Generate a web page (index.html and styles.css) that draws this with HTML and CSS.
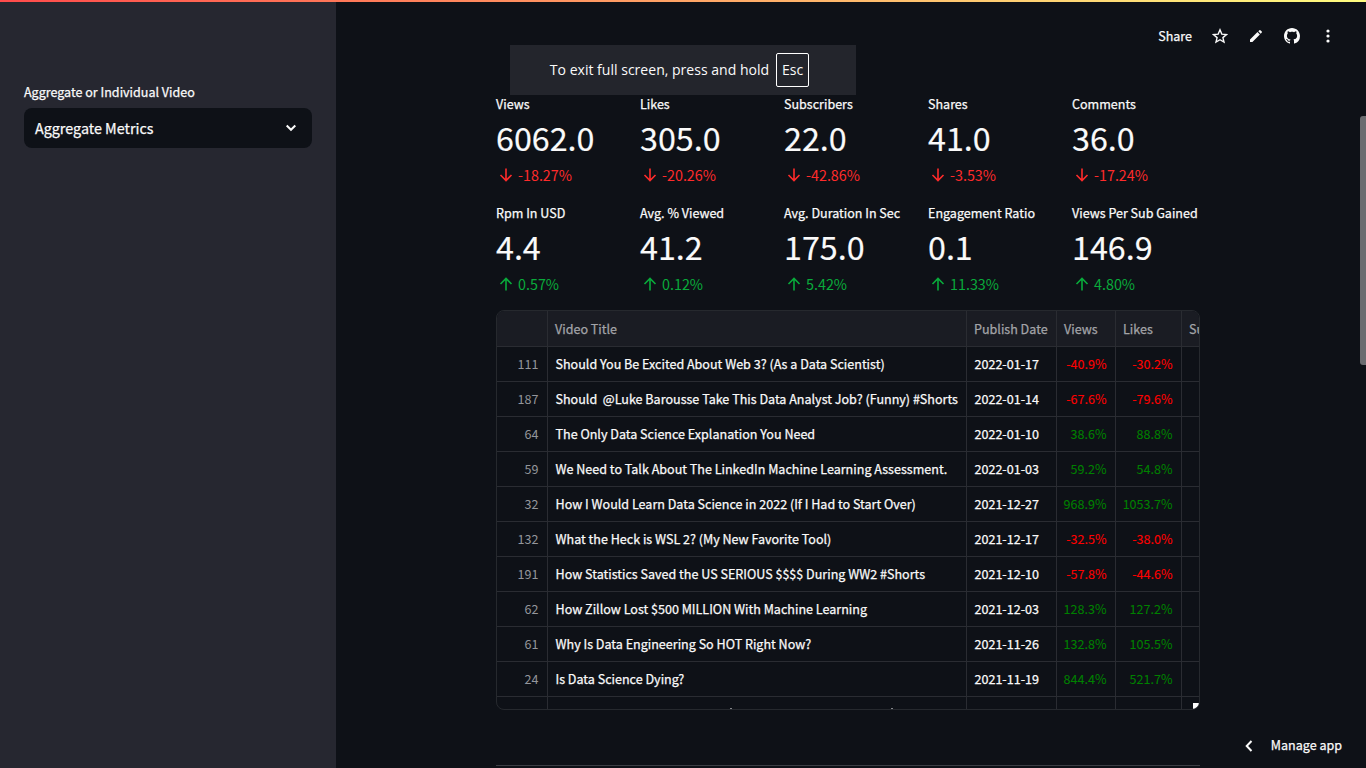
FILE: index.html
```html
<!DOCTYPE html>
<html lang="en">
<head>
<meta charset="utf-8">
<title>Video analytics</title>
<link rel="stylesheet" href="styles.css">
</head>
<body>
<div class="decoration"></div>
<div class="app">
  <aside class="sidebar">
    <div class="field-label">Aggregate or Individual Video</div>
    <div class="select"><span>Aggregate Metrics</span>
      <svg width="12" height="8" viewBox="0 0 12 8"><path d="M1.7 1.5 6 5.8l4.3-4.3" fill="none" stroke="#fafafa" stroke-width="2"/></svg>
    </div>
  </aside>
  <main class="main">
    <header class="toolbar">
      <span class="share">Share</span>
      <svg width="16" height="16" viewBox="0 0 16 16"><path d="m8 1.8 1.8 4.3 4.7.4-3.6 3.1 1.1 4.5-4-2.4-4 2.4 1.100-4.500L1.500 6.500l4.700-.4z" fill="none" stroke="#fafafa" stroke-width="1.4"/></svg>
      <svg width="16" height="16" viewBox="0 0 16 16"><path d="M2 11.600 9.500 4.100l2.400 2.400L4.400 14H2zM10.300 3.300l1.100-1.100q.5-.4 1 0l1.400 1.400q.4.500 0 1l-1.100 1.100z" fill="#fafafa"/></svg>
      <svg width="16" height="16" viewBox="0 0 16 16"><path fill="#fafafa" d="M8 0C3.58 0 0 3.58 0 8c0 3.54 2.29 6.53 5.47 7.59.4.07.55-.17.55-.38 0-.19-.01-.82-.01-1.49-2.01.37-2.53-.49-2.69-.94-.09-.23-.48-.94-.82-1.13-.28-.15-.68-.52-.01-.53.63-.01 1.08.58 1.23.82.72 1.21 1.87.87 2.33.66.07-.52.28-.87.51-1.07-1.78-.2-3.64-.89-3.64-3.95 0-.87.31-1.59.82-2.15-.08-.2-.36-1.02.08-2.12 0 0 .67-.21 2.2.82.64-.18 1.32-.27 2-.27s1.36.09 2 .27c1.53-1.04 2.2-.82 2.2-.82.44 1.1.16 1.92.08 2.12.51.56.82 1.27.82 2.15 0 3.07-1.87 3.75-3.65 3.95.29.25.54.73.54 1.48 0 1.07-.01 1.93-.01 2.2 0 .21.15.46.55.38A8.01 8.01 0 0 0 16 8c0-4.42-3.58-8-8-8"/></svg>
      <svg width="16" height="16" viewBox="0 0 16 16" fill="#fafafa"><circle cx="8" cy="3" r="1.6"/><circle cx="8" cy="8" r="1.6"/><circle cx="8" cy="13" r="1.6"/></svg>
    </header>
    <div class="content">
      <section class="metrics" id="metrics"></section>
      <div class="table" id="table">
        <div class="row head"><span></span><span>Video Title</span><span>Publish Date</span><span>Views</span><span>Likes</span><span>Su</span></div>
      </div>
      <div class="divider"></div>
    </div>
    <div class="manage"><svg width="8" height="12" viewBox="0 0 8 12"><path d="M6.5 1 1.7 6l4.8 5" fill="none" stroke="#fafafa" stroke-width="2"/></svg><span>Manage app</span></div>
    <div class="scroll-thumb"></div>
  </main>
</div>
<div class="fullscreen-tip"><span>To exit full screen, press and hold</span><kbd>Esc</kbd></div>
<script src="app.js"></script>
</body>
</html>
```
FILE: styles.css
```css
* { box-sizing: border-box; }
body {
  margin: 0;
  height: 768px;
  overflow: hidden;
  background: #0e1117;
  color: #fafafa;
  font-family: "Noto Sans CJK SC", "Noto Sans", sans-serif;
  font-size: 12.54px;
  -webkit-text-stroke: 0.25px currentColor;
}
svg { display: block; flex: none; }
.decoration {
  position: absolute;
  inset: 0 0 auto 0;
  height: 2px;
  z-index: 3;
  background: linear-gradient(90deg, #ff4b4b, #fffd80);
}
.app { display: flex; height: 768px; }
.sidebar { width: 336px; flex: none; background: #262730; padding: 82px 24px 0; }
.field-label { height: 20px; line-height: 20px; margin-bottom: 6px; }
.select {
  height: 40px;
  border-radius: 8px;
  background: #0e1117;
  padding: 0 15px 0 11px;
  display: flex;
  align-items: center;
  justify-content: space-between;
  font-size: 14.33px;
  line-height: 24px;
}
.main { position: relative; flex: 1; }
.toolbar {
  display: flex;
  align-items: center;
  justify-content: flex-end;
  gap: 20px;
  height: 72px;
  padding-right: 30px;
}
.share { line-height: 20px; }
.content { width: 704px; margin-left: 160px; padding-top: 22px; }
.metrics { display: grid; grid-template-columns: repeat(5, 128px); column-gap: 16px; row-gap: 16px; }
.metric { height: 93px; white-space: nowrap; }
.metric-label { height: 20px; line-height: 20px; }
.metric-value { height: 49px; line-height: 46px; font-size: 32.25px; -webkit-text-stroke-width: 0.15px; }
.metric-delta { display: flex; align-items: center; height: 24px; line-height: 24px; font-size: 14.33px; gap: 2px; -webkit-text-stroke-width: 0; }
.metric-delta.down { color: #ff2b2b; }
.metric-delta.up { color: #09ab3b; }
.table {
  position: relative;
  margin-top: 14px;
  height: 400px;
  border: 1px solid #26292e;
  border-radius: 8px;
  overflow: hidden;
}
.row { display: grid; grid-template-columns: 51px 419px 90px 59px 66px 17px; height: 35px; }
.row > span {
  border-right: 1px solid #2a2c32;
  border-bottom: 1px solid #2a2c32;
  padding: 0 8px 0 7.5px;
  line-height: 34px;
  font-size: 12.55px;
  white-space: pre;
  overflow: hidden;
}
.row > span:last-child { border-right: 0; }
.row.head { height: 36px; background: #1a1c23; color: #a3a4a8; }
.row.head > span { line-height: 36px; padding-left: 7px; }
.row .index { text-align: right; color: #94969b; padding-right: 8.5px; -webkit-text-stroke-width: 0; }
.row .num { text-align: right; padding-left: 0; padding-right: 8.5px; -webkit-text-stroke-width: 0.1px; }
.red { color: #ff0000; }
.green { color: #008000; }
.mark { position: absolute; bottom: 0; width: 2px; height: 1px; background: #85878b; }
.mark.first { left: 233px; }
.mark.second { left: 394px; }
.corner { position: absolute; right: 0; bottom: 0; width: 6px; height: 6px; background: #fff; }
.divider { height: 1px; margin-top: 55px; background: #3c3e44; }
.manage {
  position: absolute;
  right: 24px;
  bottom: 12px;
  display: flex;
  align-items: center;
  gap: 18px;
  height: 20px;
}
.manage span { line-height: 20px; padding-bottom: 2px; }
.scroll-thumb { position: absolute; right: 0; top: 116px; width: 6px; height: 249px; border-radius: 3px 0 0 3px; background: #6b6c70; }
.fullscreen-tip {
  position: absolute;
  left: 510px;
  top: 45px;
  width: 346px;
  height: 50px;
  padding-right: 7px;
  background: #23252c;
  display: flex;
  align-items: center;
  justify-content: center;
  gap: 7px;
  font: 14.05px/20px "Open Sans", "Noto Sans", sans-serif;
  -webkit-text-stroke-width: 0;
  white-space: nowrap;
}
.fullscreen-tip kbd { width: 33px; height: 34px; border: 1px solid #fff; border-radius: 2px; font: inherit; line-height: 32px; text-align: center; }
```
FILE: app.js
```js
const metrics = [
  ["Views", "6062.0", "-18.27%"], ["Likes", "305.0", "-20.26%"], ["Subscribers", "22.0", "-42.86%"],
  ["Shares", "41.0", "-3.53%"], ["Comments", "36.0", "-17.24%"],
  ["Rpm In USD", "4.4", "0.57%"], ["Avg. % Viewed", "41.2", "0.12%"], ["Avg. Duration In Sec", "175.0", "5.42%"],
  ["Engagement Ratio", "0.1", "11.33%"], ["Views Per Sub Gained", "146.9", "4.80%"]
];
const videos = [
  [111, "Should You Be Excited About Web 3? (As a Data Scientist)", "2022-01-17", "-40.9%", "-30.2%"],
  [187, "Should  @Luke Barousse Take This Data Analyst Job? (Funny) #Shorts", "2022-01-14", "-67.6%", "-79.6%"],
  [64, "The Only Data Science Explanation You Need", "2022-01-10", "38.6%", "88.8%"],
  [59, "We Need to Talk About The LinkedIn Machine Learning Assessment.", "2022-01-03", "59.2%", "54.8%"],
  [32, "How I Would Learn Data Science in 2022 (If I Had to Start Over)", "2021-12-27", "968.9%", "1053.7%"],
  [132, "What the Heck is WSL 2? (My New Favorite Tool)", "2021-12-17", "-32.5%", "-38.0%"],
  [191, "How Statistics Saved the US SERIOUS $$$$ During WW2 #Shorts", "2021-12-10", "-57.8%", "-44.6%"],
  [62, "How Zillow Lost $500 MILLION With Machine Learning", "2021-12-03", "128.3%", "127.2%"],
  [61, "Why Is Data Engineering So HOT Right Now?", "2021-11-26", "132.8%", "105.5%"],
  [24, "Is Data Science Dying?", "2021-11-19", "844.4%", "521.7%"]
];
const arrows = {
  down: "M10 3.5v12M4.5 10l5.5 5.5 5.5-5.5",
  up: "M10 16.5v-12M4.5 10 10 4.5l5.5 5.5"
};
document.getElementById("metrics").innerHTML = metrics.map(([label, value, delta]) => {
  const dir = delta[0] === "-" ? "down" : "up";
  return `<div class="metric"><div class="metric-label">${label}</div><div class="metric-value">${value}</div>
    <div class="metric-delta ${dir}"><svg width="20" height="20" viewBox="0 0 20 20"><path d="${arrows[dir]}" fill="none" stroke="currentColor" stroke-width="1.6"/></svg><span>${delta}</span></div></div>`;
}).join("");
const tone = v => v[0] === "-" ? "red" : "green";
document.getElementById("table").innerHTML += videos.map(([id, title, date, views, likes]) =>
  `<div class="row"><span class="index">${id}</span><span>${title}</span><span>${date}</span><span class="num ${tone(views)}">${views}</span><span class="num ${tone(likes)}">${likes}</span><span></span></div>`
).join("") + `<div class="row"><span></span><span></span><span></span><span></span><span></span><span></span></div>
  <i class="mark first"></i><i class="mark second"></i><i class="corner"></i>`;
```
